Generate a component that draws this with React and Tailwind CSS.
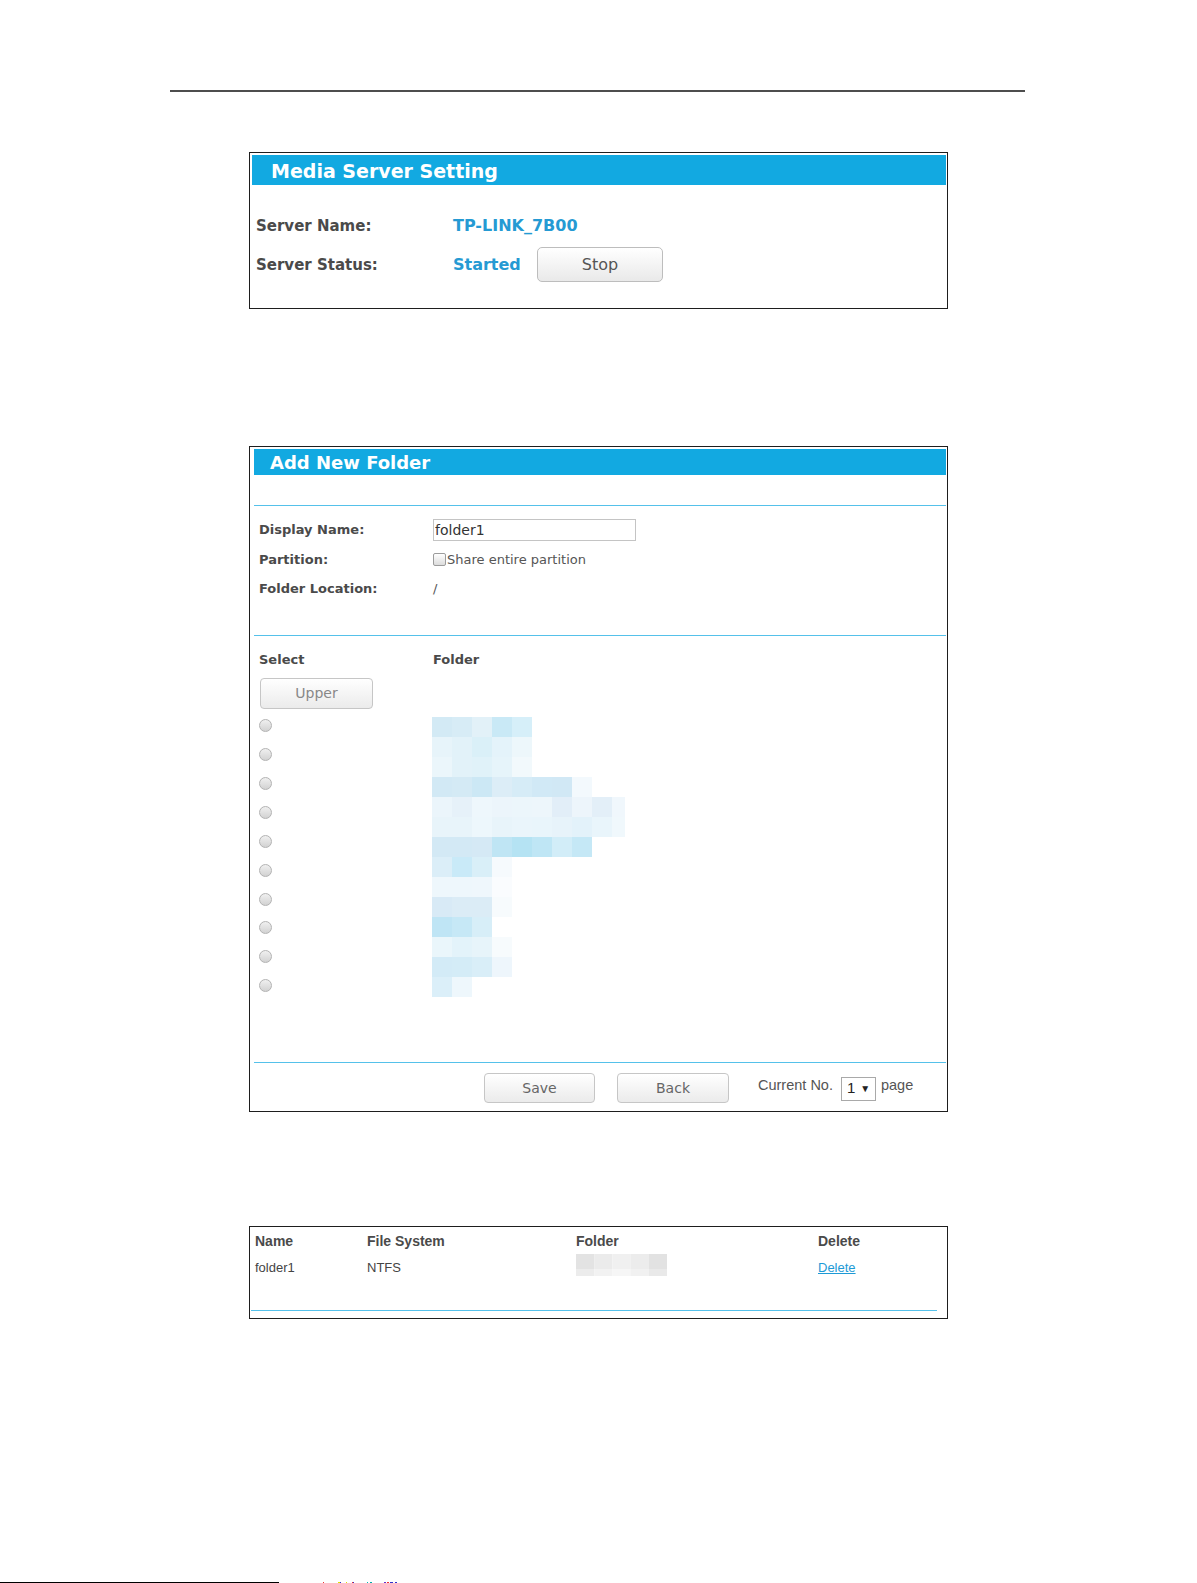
import React from 'react';

// pixelated folder names in the browse list, one array per 20px band
const folderMosaic = [
  ['#d3eaf5', '#d7ecf6', '#e2f1f8', '#c9e9f6', '#d6eff9'],
  ['#e7f4fa', '#e2f2f9', '#daf0f8', '#e4f3fa', '#edf7fb'],
  ['#ebf6fb', '#e2f2f9', '#e0f2f9', '#e6f4fa', '#f2f9fc'],
  ['#d2e9f5', '#d4eaf5', '#cce8f5', '#dcedf7', '#d6ecf7', '#d1e9f6', '#d1e8f5', '#f3f9fd'],
  ['#ebf5fb', '#e6f1f9', '#eef7fc', '#ecf5fb', '#ecf6fb', '#edf6fb', '#e2eef8', '#edf5fb', '#e3eff8', '#f0f7fc'],
  ['#e8f4fa', '#e8f4fa', '#edf7fc', '#e8f4fa', '#eaf5fb', '#e9f5fb', '#e7f3fa', '#e3f2fa', '#e9f5fb', '#f0f8fc'],
  ['#d3e9f5', '#d3e9f5', '#d5e9f5', '#bfe5f4', '#b5e3f3', '#bfe6f5', '#d2edf8', '#c5e8f6'],
  ['#dbeef8', '#c9eaf8', '#d9eff8', '#f6fafd'],
  ['#eef7fc', '#eef7fc', '#eff7fc', '#fafcfe'],
  ['#d8eaf6', '#dbecf6', '#dbecf6', '#f7fbfd'],
  ['#bfe5f5', '#c6e8f6', '#d7eef8'],
  ['#eaf6fb', '#e3f3fa', '#e7f4fa', '#f7fbfd'],
  ['#d3ebf7', '#d4ecf7', '#d9eef8', '#eef6fc'],
  ['#dbeff9', '#eef7fc'],
];

const sharedMosaic = [
  ['#e3e3e3', '#ebebeb', '#f0f0f0', '#ececec', '#e2e2e2'],
  ['#ececec', '#f2f2f2', '#f6f6f6', '#f1f1f1', '#e9e9e9'],
];

const Mosaic = ({ rows, cell, width, height, rowHeights }) => {
  let y = 0;
  return (
    <svg width={width} height={height} className="block">
      {rows.map((row, r) => {
        const h = rowHeights ? rowHeights[r] : cell;
        const top = y;
        y += h;
        return row.map((c, i) => (
          <rect key={`${r}-${i}`} x={i * cell} y={top} width={cell} height={h} fill={c} />
        ));
      })}
    </svg>
  );
};

const GrayButton = ({ children, className }) => (
  <button
    className={`rounded-[4px] border border-[#c6c6c6] bg-linear-to-b from-white to-[#ebebeb] text-[14px] text-[#666] ${className}`}
  >
    {children}
  </button>
);

const Radio = () => (
  <span className="block h-[13px] w-[13px] rounded-full border border-[#b3b3b3] bg-linear-to-b from-[#f0f0f0] to-[#d2d2d2]" />
);

const label = 'text-[13px] font-bold leading-[22px] text-[#4a4a4a]';

const App = () => {
  return (
    <div className="h-[1583px] w-[1197px] overflow-hidden bg-white pt-[90px] font-['DejaVu_Sans',sans-serif]">
      <div className="ml-[170px] h-[2px] w-[855px] bg-[#4d4d4d]" />

      {/* Media server */}
      <section className="ml-[249px] mt-[60px] w-[699px] border border-[#1e1e1e]">
        <div className="ml-[2px] mr-[1px] mt-[2px] h-[30px] bg-[#12a9e1] pl-[19px] text-[19px] font-bold leading-[33px] text-white">
          Media Server Setting
        </div>
        <div className="pb-[26px] pl-[6px] pt-[31px]">
          <div className="flex h-[20px] leading-[20px]">
            <span className="w-[197px] text-[15px] font-bold text-[#4a4a4a]">Server Name:</span>
            <span className="text-[16px] font-bold text-[#259ad3]">TP-LINK_7B00</span>
          </div>
          <div className="mt-[11px] flex h-[35px] items-start leading-[20px]">
            <span className="mt-[7.5px] w-[197px] text-[15px] font-bold text-[#4a4a4a]">Server Status:</span>
            <span className="mt-[7.5px] w-[84px] text-[16px] font-bold text-[#259ad3]">Started</span>
            <button className="h-[35px] w-[126px] rounded-[5px] border border-[#bdbdbd] bg-linear-to-b from-white to-[#e9e9e9] text-[16px] text-[#555]">
              Stop
            </button>
          </div>
        </div>
      </section>

      {/* Add folder */}
      <section className="ml-[249px] mt-[137px] h-[666px] w-[699px] border border-[#1e1e1e]">
        <div className="ml-[4px] mr-[1px] mt-[2px] h-[26px] bg-[#12a9e1] pl-[16px] text-[18px] font-bold leading-[28px] text-white">
          Add New Folder
        </div>
        <div className="ml-[4px] mr-[1px] mt-[30px] h-px bg-[#55c1ea]" />

        <div className="pl-[9px]">
          <div className="mt-[13px] flex h-[22px]">
            <span className={`w-[174px] ${label}`}>Display Name:</span>
            <div className="h-[22px] w-[203px] border border-[#c4c4c4] pl-[1px] text-[14px] leading-[20px] text-[#333]">
              folder1
            </div>
          </div>
          <div className="mt-[7.5px] flex h-[22px] items-center">
            <span className={`w-[174px] ${label}`}>Partition:</span>
            <span className="h-[13px] w-[13px] rounded-[2px] border border-[#9c9c9c] bg-linear-to-b from-white to-[#dcdcdc]" />
            <span className="ml-[1px] text-[13px] leading-[22px] text-[#555]">Share entire partition</span>
          </div>
          <div className="mt-[7px] flex h-[22px]">
            <span className={`w-[174px] ${label}`}>Folder Location:</span>
            <span className="text-[13px] leading-[22px] text-[#555]">/</span>
          </div>
        </div>

        <div className="ml-[4px] mr-[1px] mt-[35px] h-px bg-[#55c1ea]" />

        <div className="pl-[9px]">
          <div className="mt-[13px] flex h-[22px]">
            <span className={`w-[174px] ${label}`}>Select</span>
            <span className={label}>Folder</span>
          </div>
          <GrayButton className="ml-[1px] mt-[7px] h-[31px] w-[113px] text-[#888]">Upper</GrayButton>
          <div className="flex">
            <div className="w-[174px] pt-[2.75px]">
              {Array.from({ length: 10 }).map((_, i) => (
                <div key={i} className="flex h-[28.9px] items-center">
                  <Radio />
                </div>
              ))}
            </div>
            <div className="-ml-px pt-[8.5px]">
              <Mosaic rows={folderMosaic} cell={20} width={193} height={280} />
            </div>
          </div>
        </div>

        <div className="ml-[4px] mr-[1px] mt-[62px] h-px bg-[#55c1ea]" />

        <div className="ml-[234px] mt-[10px] flex items-start font-['Liberation_Sans',Arial,sans-serif]">
          <GrayButton className="h-[30px] w-[111px] font-['DejaVu_Sans',sans-serif]">Save</GrayButton>
          <GrayButton className="ml-[22px] h-[30px] w-[112px] font-['DejaVu_Sans',sans-serif]">Back</GrayButton>
          <span className="ml-[29px] mt-[4px] text-[14.5px] leading-[16px] text-[#555]">Current No.</span>
          <div className="ml-[8px] mt-[3.5px] flex h-[24px] w-[35px] items-center border border-[#a9a9a9] pl-[5px] text-[15px] text-[#222]">
            <span>1</span>
            <span className="ml-[5px] text-[10px]">▼</span>
          </div>
          <span className="ml-[5px] mt-[4px] text-[14.5px] leading-[16px] text-[#555]">page</span>
        </div>
      </section>

      {/* Shared folders */}
      <section className="ml-[249px] mt-[114px] h-[93px] w-[699px] border border-[#1e1e1e] font-['Liberation_Sans',Arial,sans-serif]">
        <div className="grid grid-cols-[112px_209px_242px_1fr] pl-[5px] pt-[6px] text-[14px] font-bold leading-[16px] text-[#4a4a4a]">
          <span>Name</span>
          <span>File System</span>
          <span>Folder</span>
          <span>Delete</span>
        </div>
        <div className="mt-[11px] grid h-[16px] grid-cols-[112px_209px_242px_1fr] items-start pl-[5px] text-[13px] leading-[16px] text-[#444]">
          <span>folder1</span>
          <span>NTFS</span>
          <div className="-mt-[6.5px]">
            <Mosaic rows={sharedMosaic} cell={18.2} width={91} height={22} rowHeights={[15, 7]} />
          </div>
          <a className="text-[#1d9ad6] underline">Delete</a>
        </div>
        <div className="ml-[1px] mt-[34px] h-px w-[686px] bg-[#55c1ea]" />
      </section>

      <div className="mt-[263px] flex h-px items-start">
        <div className="h-px w-[279px] bg-black" />
        <svg width="80" height="1" className="ml-[44px] block">
          <rect x="0" y="0" width="1" height="1" fill="#e33" />
          <rect x="15" y="0" width="2" height="1" fill="#dd0" />
          <rect x="17" y="0" width="1" height="1" fill="#33c" />
          <rect x="23" y="0" width="1" height="1" fill="#dd0" />
          <rect x="29" y="0" width="1" height="1" fill="#e33" />
          <rect x="30" y="0" width="1" height="1" fill="#33c" />
          <rect x="44" y="0" width="1" height="1" fill="#0bb" />
          <rect x="47" y="0" width="2" height="1" fill="#0aa" />
          <rect x="61" y="0" width="2" height="1" fill="#63c" />
          <rect x="64" y="0" width="2" height="1" fill="#e33" />
          <rect x="67" y="0" width="3" height="1" fill="#33c" />
          <rect x="72" y="0" width="2" height="1" fill="#33c" />
        </svg>
      </div>
    </div>
  );
};

export default App;
